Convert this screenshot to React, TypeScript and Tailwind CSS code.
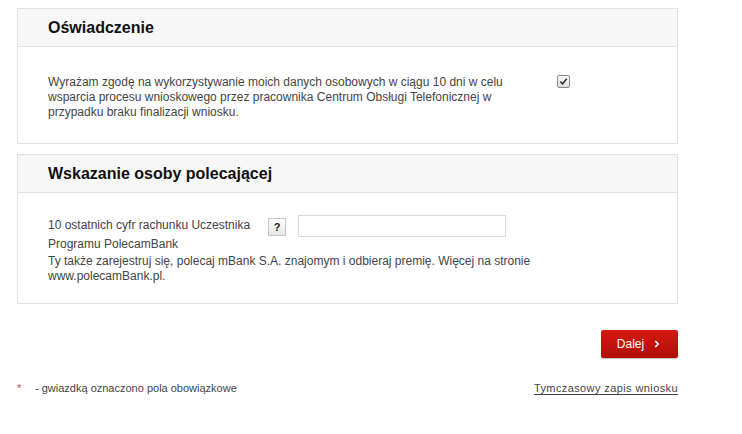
import { ChevronRight } from 'lucide-react';

const font = { fontFamily: '"Liberation Sans", Arial, sans-serif' };

function Panel({ title, children, bodyClass }: { title: string; children: React.ReactNode; bodyClass: string }) {
  return (
    <section className="border border-[#e2e2e2] bg-white">
      <div className="h-[38px] bg-[#f7f7f7] border-b border-[#e2e2e2] pl-[30px] flex items-center">
        <h2 className="text-[16px] font-bold text-[#111]">{title}</h2>
      </div>
      <div className={bodyClass}>{children}</div>
    </section>
  );
}

export default function App() {
  return (
    <div className="w-[742px] h-[434px] bg-white pt-[8px] pl-[17px]" style={font}>
      <div className="w-[661px] flex flex-col gap-[10px]">
        <Panel title="Oświadczenie" bodyClass="h-[96px] pl-[30px] pt-[28px] flex">
          <p className="w-[480px] text-[12px] leading-[15px] text-[#444]">
            Wyrażam zgodę na wykorzystywanie moich danych osobowych w ciągu 10 dni w celu wsparcia procesu wnioskowego przez
            pracownika Centrum Obsługi Telefonicznej w przypadku braku finalizacji wniosku.
          </p>
          <div className="ml-[29px] mt-[0px] w-[13px] h-[13px] rounded-[2px] border border-[#8a8a8a] bg-gradient-to-b from-[#fbfbfb] to-[#dcdcdc] flex items-center justify-center">
            <svg viewBox="0 0 10 10" className="w-[9px] h-[9px]">
              <path d="M1.5 5.2 L4 7.6 L8.6 2" fill="none" stroke="#333" strokeWidth="1.8" />
            </svg>
          </div>
        </Panel>

        <Panel title="Wskazanie osoby polecającej" bodyClass="h-[110px] pl-[30px] pt-[23px]">
          <div className="flex items-start">
            <div className="w-[220px] text-[12px] leading-[19px] text-[#444]">
              10 ostatnich cyfr rachunku Uczestnika Programu PolecamBank
            </div>
            <button className="mt-[2px] w-[18px] h-[18px] border border-[#c8c8c8] bg-gradient-to-b from-white to-[#e6e6e6] text-[11px] font-bold text-[#222] leading-none">
              ?
            </button>
            <input className="ml-[12px] -mt-[1px] w-[208px] h-[22px] border border-[#dcdcdc] bg-white outline-none" />
          </div>
          <p className="w-[500px] text-[12px] leading-[15px] text-[#444]">
            Ty także zarejestruj się, polecaj mBank S.A. znajomym i odbieraj premię. Więcej na stronie www.polecamBank.pl.
          </p>
        </Panel>

        <div className="flex justify-end mt-[16px]">
          <button className="w-[77px] h-[28px] rounded-[2px] bg-gradient-to-b from-[#d41a12] to-[#b00d08] text-white text-[12px] flex items-center justify-center gap-[8px] shadow-[0_1px_1px_rgba(0,0,0,0.25)]">
            Dalej
            <ChevronRight className="w-[10px] h-[10px]" strokeWidth={4} />
          </button>
        </div>

        <div className="flex justify-between items-center mt-[12px] text-[11px]">
          <div className="flex items-center text-[#444]">
            <span className="text-[#c4463f] w-[18px]">*</span>
            <span>- gwiazdką oznaczono pola obowiązkowe</span>
          </div>
          <a className="text-[#444] underline underline-offset-2 tracking-[0.4px]">Tymczasowy zapis wniosku</a>
        </div>
      </div>
    </div>
  );
}
